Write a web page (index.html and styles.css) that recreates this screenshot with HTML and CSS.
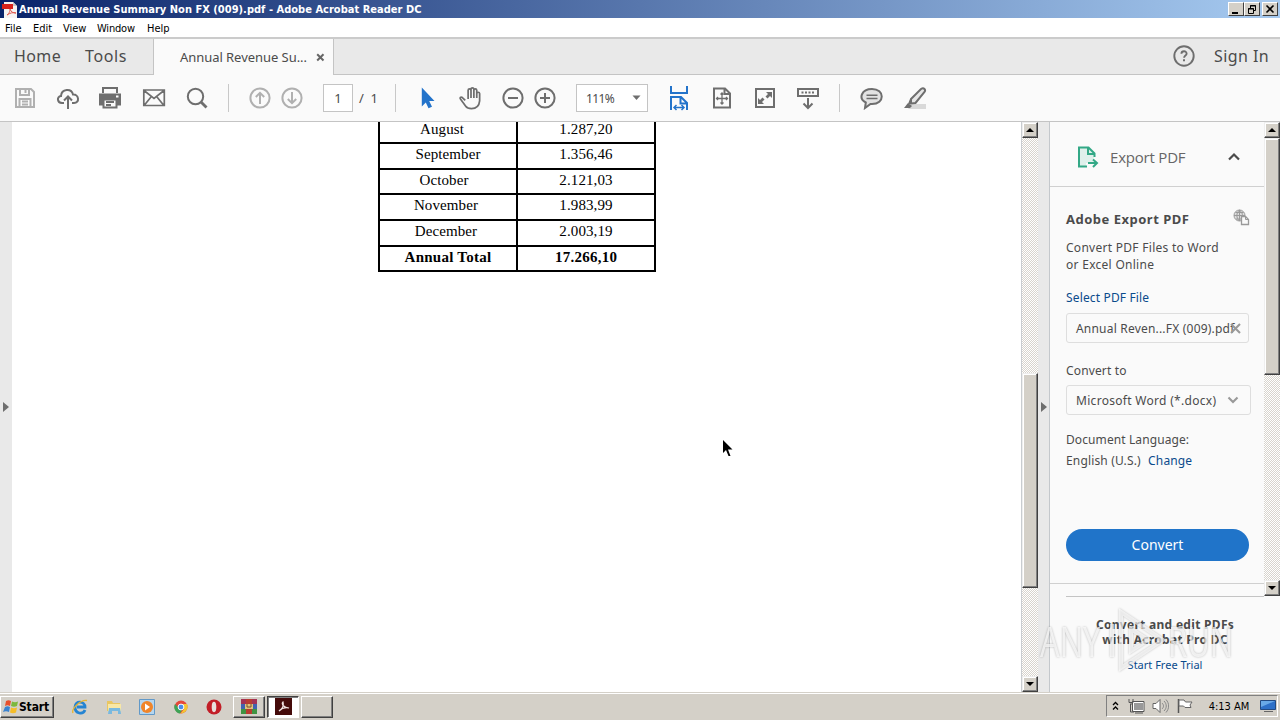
FILE: index.html
```html
<!DOCTYPE html>
<html lang="en">
<head>
    <meta charset="UTF-8">
    <meta name="viewport" content="width=device-width, initial-scale=1.0">
    <title>Annual Revenue Summary Non FX (009).pdf - Adobe Acrobat Reader DC</title>
    <link rel="stylesheet" href="styles.css">
</head>
<body>
    <div class="titlebar">
        <svg class="app-icon" width="16" height="17" viewBox="0 0 16 17"><path d="M2 1h9l4 4v12H2z" fill="#f6f4f2"/><path d="M11 1v4h4z" fill="#c9c5c2"/><path d="M0 3h11v5H0z" fill="#d8231b"/><path d="M5 14c3-2 3-5 3-6 1 3 3 4 6 4-3-1-6 0-9 2z" fill="none" stroke="#e0584c"/></svg>
        <span class="caption">Annual Revenue Summary Non FX (009).pdf - Adobe Acrobat Reader DC</span>
        <div class="win-buttons">
            <span class="win-btn"><svg width="12" height="10" viewBox="0 0 12 10"><path d="M2 8h6v2H2z"/></svg></span>
            <span class="win-btn"><svg width="12" height="10" viewBox="0 0 12 10"><path d="M4.5 4V1.500h5v5H8M4 2h6M2.500 4.500h5v5h-5zM2 5h6" fill="none" stroke="#000"/></svg></span>
            <span class="win-btn close"><svg width="12" height="10" viewBox="0 0 12 10"><path d="M2.500 1.500l7 7m0-7l-7 7" fill="none" stroke="#000" stroke-width="1.600"/></svg></span>
        </div>
    </div>

    <div class="menubar">
        <span class="m-file">File</span>
        <span class="m-edit">Edit</span>
        <span class="m-view">View</span>
        <span class="m-window">Window</span>
        <span>Help</span>
    </div>

    <div class="tabs">
        <div class="tabs-left">
            <span class="home">Home</span>
            <span class="tools">Tools</span>
        </div>
        <div class="tab">
            <span class="tab-name">Annual Revenue Su...</span>
            <svg width="9" height="9" viewBox="0 0 9 9"><path d="M1.200 1.200l6.300 6.300m0-6.300L1.200 7.500" stroke="#666" stroke-width="2"/></svg>
        </div>
        <div class="tabs-right">
            <svg width="22" height="22" viewBox="0 0 22 22" fill="none" stroke="#6e6e6e" stroke-width="1.900"><circle cx="11" cy="11" r="9.700"/><path d="M8.400 8.700c.1-3.300 5.300-3.200 5.200 0 0 1.900-2.500 1.700-2.500 4"/><path d="M11 14.300v2" stroke-width="2"/></svg>
            <span class="sign-in">Sign In</span>
        </div>
    </div>

    <div class="toolbar">
        <div class="group wide">
            <svg class="icon light" viewBox="0 0 24 24"><path d="M3 3h15l3 3v15H3z"/><path d="M7 3v6h9V3M12.500 4v3"/><path d="M6.500 21v-8h11v8M9 15.500h6M9 18.500h6"/></svg>
            <svg class="icon" viewBox="0 0 24 24"><path d="M8 17H6C1 17 .5 10.500 5 10 5.500 2.500 15.500 2 17 8.500c6-.5 7 8.500 1 8.500h-2"/><path d="M12 23V11M8 14.500l4-4 4 4"/></svg>
            <svg class="icon printer" viewBox="0 0 24 24"><path d="M5 7V2h14v5"/><path d="M1 7.500h22v12h-4V14H5v5.500H1z" fill="#6e6e6e" stroke="none"/><path d="M5.500 13.500h13v8h-13zM8 16h8M8 19h5" fill="#fafafa"/><path d="M18 10.500h2.500" stroke="#fff"/></svg>
            <svg class="icon" viewBox="0 0 24 24"><path d="M1.800 4h20.500v15.500H1.800zM2 4.500l10 8 10-8M2.500 19l6.500-8M21.500 19L15 11" stroke-width="1.700"/></svg>
            <svg class="icon" viewBox="0 0 24 24"><circle cx="10.500" cy="10.500" r="7.700"/><path d="M16 16l5.500 5.500" stroke-width="2.800"/></svg>
        </div>
        <i class="sep"></i>
        <div class="group">
            <svg class="icon light" viewBox="0 0 24 24"><circle cx="12" cy="12" r="9.600"/><path d="M12 18V7M7.800 11L12 6.800l4.200 4.200"/></svg>
            <svg class="icon light" viewBox="0 0 24 24"><circle cx="12" cy="12" r="9.600"/><path d="M12 6v11M7.800 13l4.200 4.200 4.200-4.200"/></svg>
        </div>
        <div class="page-box">1</div>
        <div class="page-total">/&nbsp; 1</div>
        <i class="sep"></i>
        <div class="group wide">
            <svg class="icon" viewBox="0 0 24 24"><path d="M6.800 1.500v19l4-4 2.700 5.700 3.500-1.500-2.800-5.700h5.300z" fill="#2373ca" stroke="none"/></svg>
            <svg class="icon" viewBox="0 0 24 24"><path d="M6.500 14.500l-3-3c-1.700-1.200-3 .2-2 1.500l5.500 7.500c1.200 1.800 3 2.500 6 2.500 5.500 0 8-3 8.500-8V7.500c-.2-2-2.800-2-3 0V12V4c-.2-2-2.800-2-3 0v8V3c-.2-2-2.900-2-3 0v9V4c-.2-2-2.900-2-3 0v9" transform="translate(1 .5) scale(.96)" stroke-width="1.800"/></svg>
            <svg class="icon" viewBox="0 0 24 24"><circle cx="12" cy="12" r="9.600"/><path d="M7 12h10"/></svg>
        </div>
        <svg class="icon zoom-in" viewBox="0 0 24 24"><circle cx="12" cy="12" r="9.600"/><path d="M7 12h10M12 7v10"/></svg>
        <div class="zoom-box"><span>111%</span><svg width="9" height="6" viewBox="0 0 9 6"><path d="M.5.500h8l-4 4.500z" fill="#6e6e6e"/></svg></div>
        <div class="group wide view-tools">
            <svg class="icon blue" viewBox="0 0 24 28"><path d="M4 2v7h16V2M4 26V13h10l6 6v7M13.500 13v6.500H20"/><path d="M7 23.500h10M9.500 21L7 23.500 9.500 26M14.500 21l2.500 2.500-2.500 2.500" stroke-width="1.500"/></svg>
            <svg class="icon" viewBox="0 0 24 24"><path d="M4 2.500h11l5 5v14H4zM14.500 2.500V8H20"/><path d="M12 7v11M6.500 12.500h11M10.500 8.500L12 7l1.500 1.500M10.500 16.500L12 18l1.500-1.500M8 11l-1.500 1.500L8 14M16 11l1.500 1.500L16 14" stroke-width="1.300"/></svg>
            <svg class="icon" viewBox="0 0 24 24"><path d="M3 3h18v18H3z"/><path d="M13 6h6v6l-2-2-2.500 2.500-2-2L15 8zM11 18H5v-6l2 2 2.500-2.500 2 2L9 16z" fill="#6e6e6e" stroke="none"/></svg>
            <svg class="icon" viewBox="0 0 24 24"><path d="M2 3h20v7H2z"/><path d="M5.500 6.500h13" stroke-dasharray="2 1.500"/><path d="M12 12v10M7.500 17.500l4.500 4.500 4.500-4.500"/></svg>
        </div>
        <i class="sep"></i>
        <div class="group wide comment-tools">
            <svg class="icon" viewBox="0 0 24 24"><path d="M12 3c13 0 13 15 0 15h-1.500L5 22l.8-5.500C-2 12.500 1.500 3 12 3z" fill="#e3e3e3"/><path d="M6.500 9.300h11M6.500 12.500h11" stroke-width="1.500"/></svg>
            <svg class="icon" viewBox="0 0 24 24"><path d="M8 18h15v5H5z" fill="#d9d9d9" stroke="none"/><path d="M8 13L18 3c3-2 5 1 3.500 3L12.500 17l-4.500.5zM8 13l-2 5" fill="#e6e6e6"/><path d="M5 17l4 3-2 2H1z" fill="#6e6e6e" stroke="none"/></svg>
        </div>
    </div>

    <div class="main">
        <div class="strip left-strip"><i class="arrow"></i></div>

        <div class="document">
            <div class="revenue">
                <div class="row"><span class="month august">August</span><span>1.287,20</span></div>
                <div class="row"><span class="month">September</span><span>1.356,46</span></div>
                <div class="row"><span class="month october">October</span><span>2.121,03</span></div>
                <div class="row"><span class="month november">November</span><span>1.983,99</span></div>
                <div class="row"><span class="month december">December</span><span>2.003,19</span></div>
                <div class="row total"><span class="month">Annual Total</span><span>17.266,10</span></div>
            </div>
        </div>

        <div class="scrollbar doc-scroll">
            <span class="sb-btn"><svg width="8" height="4" viewBox="0 0 8 4"><path d="M4 0l4 4H0z"/></svg></span>
            <span class="thumb"></span>
            <span class="sb-btn"><svg width="8" height="4" viewBox="0 0 8 4"><path d="M4 4l4-4H0z"/></svg></span>
        </div>

        <div class="strip right-strip"><i class="arrow"></i></div>

        <div class="sidebar">
            <div class="sidebar-top">
                <div class="panel">
                    <div class="panel-head">
                        <svg width="22" height="24" viewBox="0 0 22 24"><path d="M2 2h9l6 6v10H9v4H2z" fill="#dff0eb"/><path d="M10 21.500H2v-19h9.500l6 6V12M11 3v6h6" fill="none" stroke="#33a886" stroke-width="2"/><path d="M11 18h8M16 14.500l4 3.500-4 4" fill="none" stroke="#33a886" stroke-width="2"/></svg>
                        <span>Export PDF</span>
                        <svg class="chevron-up" width="14" height="9" viewBox="0 0 14 9"><path d="M2 7.500l5-5 5 5" fill="none" stroke="#4b4b4b" stroke-width="2.200"/></svg>
                    </div>
                    <div class="panel-body">
                        <div class="heading">
                            <b>Adobe Export PDF</b>
                            <svg width="17" height="17" viewBox="0 0 17 17" fill="none" stroke="#9a9a9a"><circle cx="6.500" cy="6.500" r="5.500" fill="#ddd"/><path d="M1 6.500h11M6.500 1v11M2.500 3.500h8M3 10h6M6.500 1C3 4 3 9 6.500 12M6.500 1c2.500 2 3 4 3 6"/><path d="M8.500 7.500h4l3 3v5h-7z" fill="#fafafa" stroke-width="1.300"/><path d="M12.500 7.500v3h3"/></svg>
                        </div>
                        <p class="intro">Convert PDF Files to Word<br>or Excel Online</p>
                        <a class="select-file">Select PDF File</a>
                        <div class="file-box"><span>Annual Reven...FX (009).pdf</span><svg width="11" height="11" viewBox="0 0 11 11"><path d="M1 1l9 9m0-9l-9 9" stroke="#999" stroke-width="2.100"/></svg></div>
                        <div class="label">Convert to</div>
                        <div class="format-box"><span>Microsoft Word (*.docx)</span><svg width="12" height="8" viewBox="0 0 12 8"><path d="M1.500 1.500L6 6l4.500-4.500" fill="none" stroke="#999" stroke-width="2.100"/></svg></div>
                        <div class="lang-label">Document Language:</div>
                        <div class="lang">English (U.S.) <a>Change</a></div>
                        <button class="convert">Convert</button>
                    </div>
                </div>
                <div class="scrollbar side-scroll">
                    <span class="sb-btn"><svg width="8" height="4" viewBox="0 0 8 4"><path d="M4 0l4 4H0z"/></svg></span>
                    <span class="thumb"></span>
                    <span class="sb-btn"><svg width="8" height="4" viewBox="0 0 8 4"><path d="M4 4l4-4H0z"/></svg></span>
                </div>
            </div>
            <div class="promo">
                <b>Convert and edit PDFs<br>with Acrobat Pro DC</b>
                <a>Start Free Trial</a>
            </div>
        </div>
    </div>

    <div class="taskbar">
        <div class="start">
            <svg width="16" height="16" viewBox="0 0 16 16"><path d="M3 2c2-1 3-1 5 0L7 7C5 6 4 6 2 7z" fill="#e8502c"/><path d="M9 2.500c2 1 4 1 6 0L14 7c-2 1-4 1-6 0z" fill="#7cb83c"/><path d="M2 8c2-1 3-1 5 0l-1 5c-2-1-4-1-6 0z" fill="#3a83d0"/><path d="M8 8.500c2 1 4 1 6 0l-1 5c-2 1-4 1-6 0z" fill="#f5bd28"/></svg>
            <b>Start</b>
        </div>
        <div class="quick">
            <svg width="16" height="16" viewBox="0 0 16 16"><path d="M13 11c-2 5-10 4-10-3s10-6 10 0H5" fill="none" stroke="#2584d2" stroke-width="2.800"/><path d="M1 14C-1 10 9 0 15 1.500" fill="none" stroke="#e8b530" stroke-width="1.300"/></svg>
            <svg width="16" height="16" viewBox="0 0 16 16"><path d="M1 2h5l1 2h7v8H1z" fill="#e9c661"/><path d="M2 5h13v7H2z" fill="#f8e7a5"/><path d="M3 9h11l1 6h-3v-3H6v3H2z" fill="#79b9df"/></svg>
            <svg width="16" height="16" viewBox="0 0 16 16"><path d="M.5.500h15v15H.5z" fill="#b5d6ef" stroke="#6299c8"/><circle cx="8" cy="8" r="6" fill="#f0852a"/><path d="M6 4.500l5 3.500-5 3.500z" fill="#fff"/></svg>
            <svg width="16" height="16" viewBox="0 0 16 16"><circle cx="8" cy="8" r="6.500" fill="#e5483a"/><path d="M2 5a6.500 6.500 0 0 0 5 9.500L10 9 5 8z" fill="#3da356"/><path d="M14 5H8l3 5-3.500 4.500C13 14.500 16 9 14 5z" fill="#f4c633"/><circle cx="8" cy="8" r="2.900" fill="#4a8bea" stroke="#fff"/></svg>
            <svg width="16" height="16" viewBox="0 0 16 16"><circle cx="8" cy="8" r="7.500" fill="#c21e27"/><ellipse cx="8" cy="8" rx="2.300" ry="5.200" fill="#e8e0dd"/></svg>
        </div>
        <div class="task"><svg width="18" height="17" viewBox="0 0 18 17"><path d="M1 1h16v5H1z" fill="#a43254"/><path d="M1 6h16v5H1z" fill="#4162b0"/><path d="M1 11h16v5H1z" fill="#3f9342"/><path d="M6 1h6v15H6z" fill="#b93b31"/><path d="M5 6h8v5H5z" fill="#e2c079"/><path d="M7 6v3h4V6" fill="none" stroke="#74552d"/></svg></div>
        <div class="task active"><svg width="17" height="17" viewBox="0 0 17 17"><path d="M0 0h17v17H0z" fill="#450b0a"/><path d="M4 13c4-3 5-6 4-9-2 2 1 6 6 6-4-1-7 0-10 3z" fill="none" stroke="#f1e4e2" stroke-width="1.200"/></svg></div>
        <div class="task"></div>
        <div class="tray">
            <svg width="7" height="10" viewBox="0 0 7 10"><path d="M1 4l2.500-2.500L6 4M1 8.500L3.500 6 6 8.500" fill="none" stroke="#000" stroke-width="1.300"/></svg>
            <svg class="net" width="17" height="16" viewBox="0 0 17 16"><path d="M5.500 4.500h10v8h-10z" fill="#999" stroke="#fff"/><path d="M4.500 3.500h11.500v10H4.500zM7 15h8M2.500 6v8H6M1 1v3.500h4V1M3 4v3" fill="none" stroke="#555"/></svg>
            <svg class="sound" width="17" height="16" viewBox="0 0 17 16"><path d="M1 5.500h3l4-4v13l-4-4H1z" fill="#fff" stroke="#666"/><path d="M10 5c2 2 2 4 0 6M12 3c3 3 3 7 0 10M14 1.500c3.500 4 3.500 9 0 13" fill="none" stroke="#888"/></svg>
            <svg class="flag" width="17" height="16" viewBox="0 0 17 16"><path d="M2.500 1v14" stroke="#555" stroke-width="1.500"/><path d="M3 2h5l1.500 2H16l-2 3 1 2.500H9L7.500 8H3z" fill="#fff" stroke="#666"/></svg>
            <span class="clock">4:13 AM</span>
            <svg width="16" height="14" viewBox="0 0 16 14"><path d="M.5 1.500h15v9H.5z" fill="#2e70c8" stroke="#234a82"/><path d="M1 2h14L1 8z" fill="#69a9e8"/><path d="M4 12.500h9" stroke="#666"/></svg>
        </div>
    </div>

    <div class="watermark">
        <span>ANY</span>
        <svg width="60" height="66" viewBox="0 0 60 66"><path d="M16 5l42 28-42 28zM7 17v33M26 22l17 11-17 11z" fill="none" stroke="#fff" stroke-width="4"/></svg>
        <span>RUN</span>
    </div>
    <svg class="pointer" width="12" height="19" viewBox="0 0 12 19"><path d="M1 1v13l3-3 2.500 6h2L6 10.500h4.500z"/></svg>
</body>
</html>
```
FILE: styles.css
```css
* {
    box-sizing: border-box;
}
body {
    margin: 0;
    width: 1280px;
    height: 720px;
    overflow: hidden;
    position: relative;
    display: flex;
    flex-direction: column;
    font-family: "Noto Sans", "Open Sans", sans-serif;
    color: #4b4b4b;
    background-color: #fafafa;
}
svg {
    display: block;
    flex: none;
}
span, a, b {
    white-space: nowrap;
}

/* title bar and menu */
.titlebar {
    height: 18px;
    flex: none;
    display: flex;
    align-items: center;
    padding: 0 2px;
    background: linear-gradient(to right, #0a246a, #a6caf0);
    color: white;
}
.caption {
    margin-left: 1px;
    font: bold 11px "DejaVu Sans Condensed", "DejaVu Sans", sans-serif;
    font-stretch: condensed;
    letter-spacing: 0.02px;
}
.win-buttons {
    display: flex;
    margin-left: auto;
}
.win-btn {
    width: 16px;
    height: 14px;
    padding: 1px;
    background-color: #d4d0c8;
    border: 1px solid;
    border-color: #fff #404040 #404040 #fff;
}
.win-btn.close {
    margin-left: 2px;
}
.menubar {
    height: 19px;
    flex: none;
    display: flex;
    align-items: center;
    padding: 1px 5px 0;
    background-color: #fff;
    color: #000;
    font: 11px "DejaVu Sans Condensed", "DejaVu Sans", sans-serif;
    font-stretch: condensed;
}
.m-file {
    width: 28px;
}
.m-edit {
    width: 30px;
}
.m-view {
    width: 34px;
}
.m-window {
    width: 50px;
    letter-spacing: -0.2px;
}

/* tabs */
.tabs {
    height: 38px;
    flex: none;
    display: flex;
    border-top: 2px solid #cbcbcb;
    font-size: 16px;
}
.tabs-left {
    width: 154px;
    padding: 0 0 2px 14px;
    display: flex;
    align-items: center;
    background-color: #e9e9e9;
    border-right: 1px solid #c4c4c4;
    border-bottom: 1px solid #c4c4c4;
    letter-spacing: 0.4px;
}
.home {
    width: 71px;
}
.tools {
    letter-spacing: 0.6px;
}
.tab {
    width: 179px;
    padding: 0 8px 0 26px;
    display: flex;
    align-items: center;
    justify-content: space-between;
    font-size: 13px;
}
.tab-name {
    letter-spacing: -0.05px;
}
.tabs-right {
    flex: 1;
    display: flex;
    align-items: center;
    justify-content: flex-end;
    padding: 0 11px 1px 0;
    background-color: #e9e9e9;
    border-left: 1px solid #c4c4c4;
    border-bottom: 1px solid #c4c4c4;
    letter-spacing: 0.4px;
}
.sign-in {
    margin-left: 19px;
}

/* toolbar */
.toolbar {
    height: 47px;
    flex: none;
    display: flex;
    align-items: center;
    padding-left: 13px;
    border-bottom: 1px solid #c4c4c4;
}
.group {
    display: flex;
    align-items: center;
    gap: 8px;
}
.wide {
    gap: 19px;
}
.icon {
    width: 24px;
    height: 24px;
    fill: none;
    stroke: #6e6e6e;
    stroke-width: 2;
}
.icon.light {
    stroke: #b0b0b0;
}
.icon.blue {
    height: 28px;
    stroke: #2373ca;
}
.printer {
    margin: 0 1px 0 -1px;
}
.zoom-in {
    margin-left: 8px;
}
.sep {
    width: 1px;
    height: 28px;
    margin: 0 19px;
    background-color: #c8c8c8;
}
.page-box {
    width: 30px;
    height: 28px;
    margin-left: 19px;
    border: 1px solid #c4c4c4;
    background-color: #fff;
    font-size: 13px;
    line-height: 26px;
    text-align: center;
}
.page-total {
    width: 23px;
    margin-left: 6px;
    margin-right: -6px;
    font-size: 13px;
}
.zoom-box {
    width: 72px;
    height: 28px;
    margin-left: 19px;
    padding: 0 6px 0 9px;
    display: flex;
    align-items: center;
    justify-content: space-between;
    border: 1px solid #c4c4c4;
    background-color: #fff;
    font-size: 12px;
    letter-spacing: -0.6px;
}
.view-tools {
    margin-left: 19px;
}
.comment-tools {
    margin-left: 1px;
}

/* main area */
.main {
    height: 570px;
    flex: none;
    display: flex;
}
.strip {
    width: 12px;
    display: flex;
    align-items: center;
    background-color: #e9e9e9;
}
.arrow {
    margin: -1px 0 0 3px;
    border: 5px solid transparent;
    border-left: 6px solid #6e6e6e;
    border-right: 0;
}
.document {
    width: 1010px;
    overflow: hidden;
    background-color: #fff;
    border-right: 1px solid #c8ccd0;
}
.revenue {
    width: 278px;
    margin: -3.4px 0 0 366px;
    border-left: 2px solid #000;
    color: #000;
    font: 15px/21.600px "Liberation Serif", serif;
}
.row {
    height: 25.600px;
    display: flex;
    border-bottom: 2px solid #000;
}
.row span {
    width: 138px;
    text-align: center;
    border-right: 2px solid #000;
    letter-spacing: 0.1px;
}
.total {
    font-weight: bold;
}
.row.total span {
    letter-spacing: 0.25px;
}
.row .august {
    padding-right: 12px;
}
.row .october {
    padding-right: 8px;
}
.row .november,
.row .december {
    padding-right: 4px;
}

/* classic scrollbars */
.scrollbar {
    width: 16px;
    display: flex;
    flex-direction: column;
    background: repeating-conic-gradient(#d8d4cd 0 25%, #fff 0 50%) 0 0 / 2px 2px;
}
.sb-btn {
    height: 16px;
    display: flex;
    align-items: center;
    justify-content: center;
}
.sb-btn,
.thumb {
    background-color: #d4d0c8;
    border: 1px solid;
    border-color: #eee #404040 #404040 #eee;
    box-shadow: inset -1px -1px #808080, inset 1px 1px #fff;
}
.doc-scroll .thumb {
    height: 215px;
    margin: 235px 0 88px;
}
.side-scroll .thumb {
    height: 237px;
    margin-bottom: 205px;
}
.right-strip {
    border-right: 1px solid #c4c8cc;
}

/* export panel */
.sidebar {
    flex: 1;
    display: flex;
    flex-direction: column;
    font-size: 12px;
}
.sidebar-top {
    height: 474px;
    display: flex;
}
.panel {
    width: 214px;
    height: 462px;
    border-bottom: 1px solid #d0d0d0;
}
.panel-head {
    height: 65px;
    padding: 5px 23px 0 27px;
    display: flex;
    align-items: center;
    border-bottom: 1px solid #d0d0d0;
    font-size: 15px;
    font-family: "Open Sans", sans-serif;
}
.panel-head span {
    margin-left: 11px;
    color: #666;
    letter-spacing: -0.2px;
}
.chevron-up {
    margin-left: auto;
}
.panel-body {
    padding: 20px 13px 0 16px;
}
.heading {
    height: 22px;
    display: flex;
    justify-content: space-between;
    font-size: 13px;
    line-height: 24px;
    letter-spacing: 0.5px;
}
.heading svg {
    margin: 2px 1px 0 0;
}
.intro {
    margin: 10px 0 17px;
    line-height: 17px;
    letter-spacing: 0.28px;
}
.sidebar a {
    color: #0a4b8c;
}
.select-file {
    display: block;
    height: 16px;
    line-height: 16px;
    letter-spacing: 0.15px;
}
.file-box,
.format-box {
    height: 30px;
    padding: 0 7px 0 9px;
    display: flex;
    align-items: center;
    justify-content: space-between;
    border: 1px solid #dedede;
    border-radius: 3px;
}
.file-box {
    width: 183px;
    margin-top: 7px;
    letter-spacing: 0.2px;
}
.file-box svg {
    margin-left: -6px;
}
.label {
    margin: 19px 0 6px;
    line-height: 17px;
    letter-spacing: 0.15px;
}
.format-box {
    width: 185px;
    padding-right: 11px;
    letter-spacing: 0.3px;
}
.lang-label {
    margin-top: 16px;
    line-height: 17px;
    letter-spacing: 0.1px;
}
.lang {
    margin-top: 4px;
    line-height: 17px;
    letter-spacing: 0.15px;
}
.lang a {
    margin-left: 4px;
}
.convert {
    display: block;
    width: 183px;
    height: 32px;
    margin-top: 60px;
    padding-bottom: 2px;
    border: none;
    border-radius: 16px;
    background-color: #2074c9;
    color: #fff;
    font: 14px "Noto Sans", sans-serif;
}
.promo {
    flex: 1;
    margin-left: 16px;
    width: 198px;
    padding-top: 20px;
    border-top: 1px solid #c4c4c4;
    text-align: center;
    line-height: 15px;
}
.promo b {
    display: block;
    letter-spacing: 0.3px;
}
.promo a {
    display: block;
    margin-top: 10px;
    font-size: 11px;
}

/* taskbar */
.taskbar {
    height: 28px;
    flex: none;
    display: flex;
    align-items: center;
    padding-right: 2px;
    background-color: #d4d0c8;
    box-shadow: inset 0 1px #d4d0c8, inset 0 2px #fff;
    color: #000;
}
.start,
.task {
    height: 22px;
    margin-top: 1px;
    display: flex;
    align-items: center;
    justify-content: center;
    border: 1px solid;
    border-color: #fff #404040 #404040 #fff;
    box-shadow: inset -1px -1px #808080;
}
.start {
    width: 54px;
    padding-right: 2px;
    font: 12px "DejaVu Sans Condensed", "DejaVu Sans", sans-serif;
    font-stretch: condensed;
    letter-spacing: -0.1px;
}
.quick {
    display: flex;
    gap: 17.500px;
    margin: 1px 11px 0 18px;
}
.task {
    width: 32px;
    margin-right: 2px;
}
.task.active {
    background-color: #fff;
    border-color: #404040 #fff #fff #404040;
    box-shadow: inset 1px 1px #808080;
}
.tray {
    height: 22px;
    width: 172px;
    margin-left: auto;
    padding: 0 1px 0 5px;
    display: flex;
    align-items: center;
    border: 1px solid;
    border-color: #808080 #fff #fff #808080;
    font: 11px "DejaVu Sans Condensed", "DejaVu Sans", sans-serif;
    font-stretch: condensed;
}
.net {
    margin-left: 9px;
}
.sound,
.flag {
    margin-left: 7px;
}
.clock {
    margin: 0 auto;
    padding-left: 5px;
}

/* overlays */
.watermark {
    position: absolute;
    left: 1040px;
    top: 607px;
    display: flex;
    align-items: center;
    gap: 3px;
    color: rgba(255, 255, 255, 0.7);
    font: 42px "Open Sans", sans-serif;
    filter: drop-shadow(0 0 1px rgba(0, 0, 0, 0.35));
}
.watermark span {
    width: 62px;
    transform: scaleX(0.74);
    transform-origin: left;
}
.watermark svg {
    opacity: 0.65;
}
.pointer {
    position: absolute;
    left: 722px;
    top: 439px;
}
```
